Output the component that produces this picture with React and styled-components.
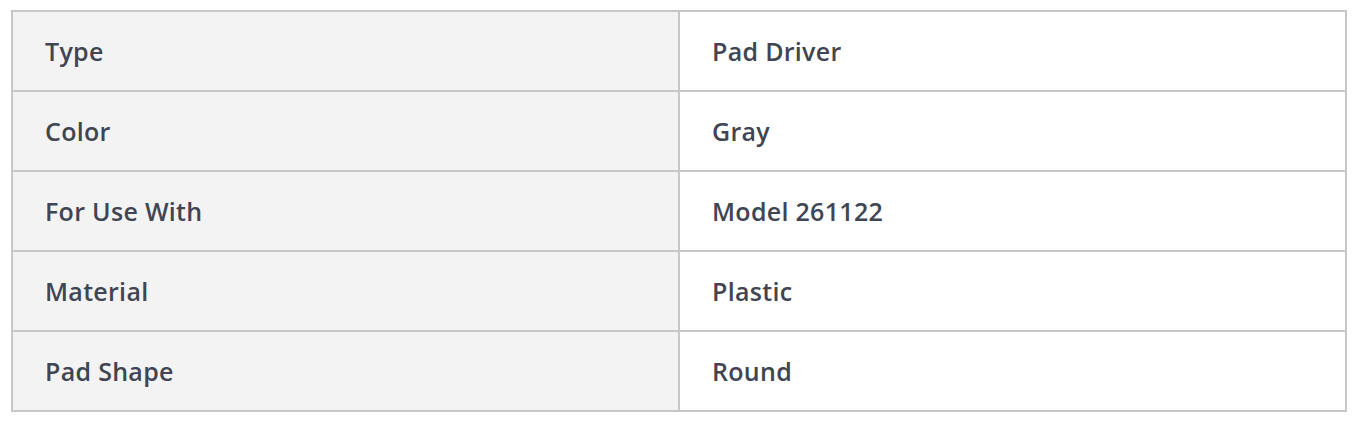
import styled, { createGlobalStyle } from "styled-components";

const GlobalStyle = createGlobalStyle`
	body {
		margin: 0;
		background: #ffffff;
		font-family: "Open Sans", "Noto Sans", sans-serif;
	}
`;

const Wrapper = styled.div`
	padding: 10px 11px;
`;

const SpecTable = styled.table`
	width: 1336px;
	border-collapse: collapse;
	table-layout: fixed;
`;

const Cell = styled.td`
	height: 80px;
	padding: 0 32px;
	border: 2px solid #c7c7c7;
	background-color: ${(p) => (p.$label ? "#f3f3f3" : "#ffffff")};
	color: #3f4552;
	font-size: 25px;
	font-weight: 600;
	letter-spacing: 0.3px;
	vertical-align: middle;
	box-sizing: border-box;
`;

const specs = [
	["Type", "Pad Driver"],
	["Color", "Gray"],
	["For Use With", "Model 261122"],
	["Material", "Plastic"],
	["Pad Shape", "Round"],
];

const App = () => {
	return (
		<>
			<GlobalStyle />
			<Wrapper>
				<SpecTable>
					<tbody>
						{specs.map(([name, value]) => (
							<tr key={name}>
								<Cell $label>{name}</Cell>
								<Cell>{value}</Cell>
							</tr>
						))}
					</tbody>
				</SpecTable>
			</Wrapper>
		</>
	);
};

export default App;
